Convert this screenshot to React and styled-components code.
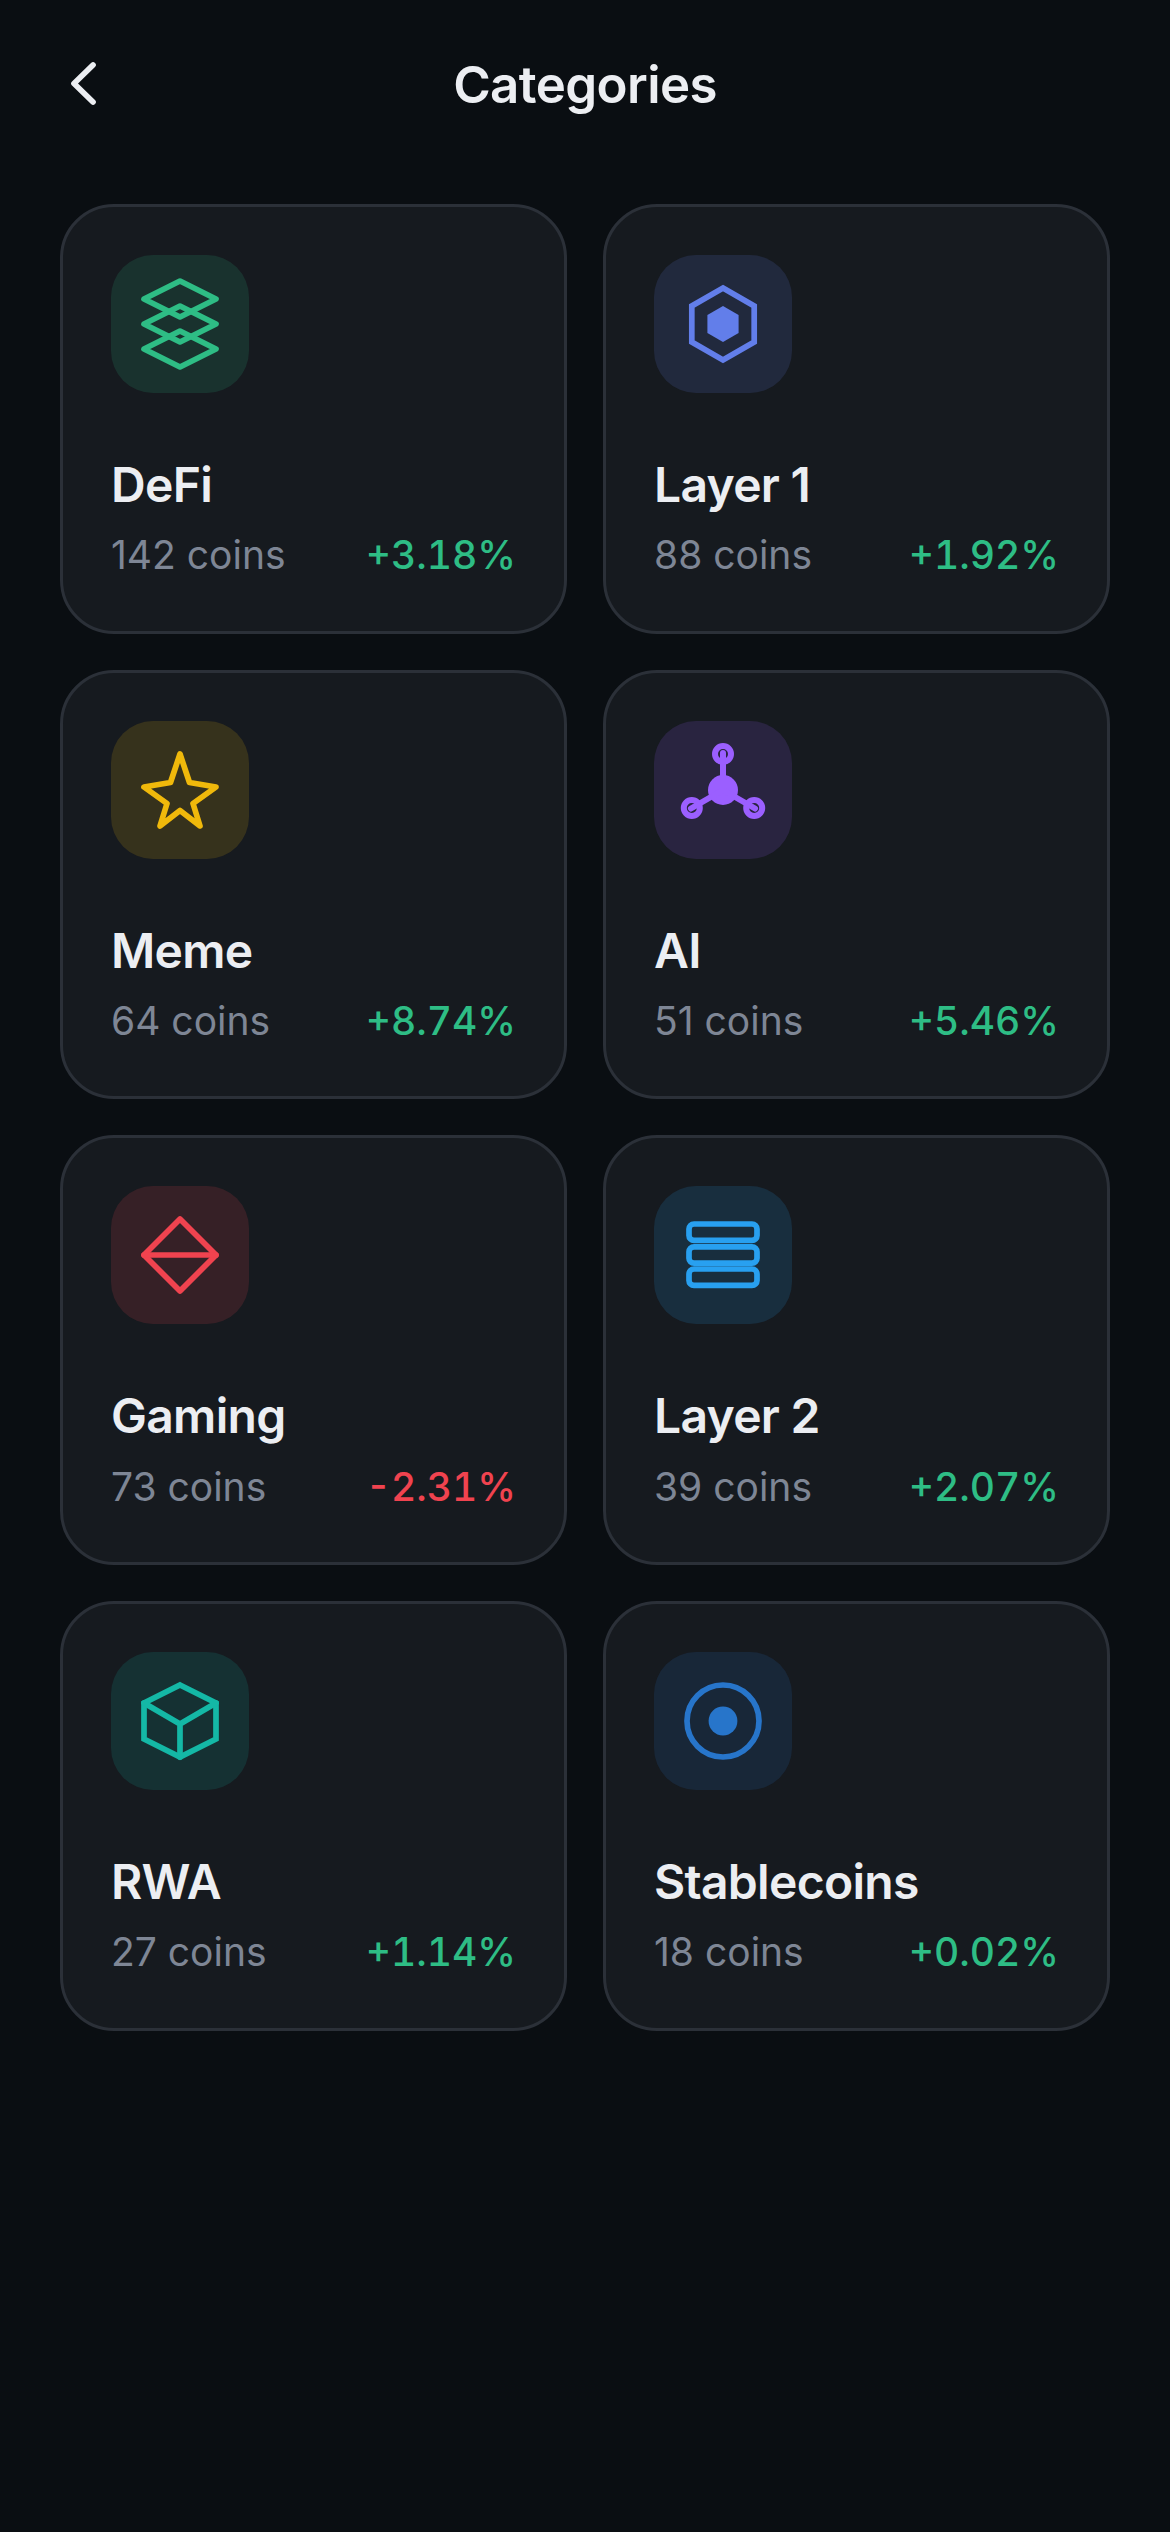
import React from 'react';
import styled, { createGlobalStyle } from 'styled-components';

const GlobalStyle = createGlobalStyle`
    html, body {
        margin: 0;
        padding: 0;
        background: #0a0e12;
    }
    body {
        font-family: Inter, "Noto Sans", sans-serif;
        -webkit-font-smoothing: antialiased;
    }
`;

// icons are drawn in real pixels around the middle of the tile
const Icon = ({ color, children }) => (
    <IconSvg
        viewBox="-45 -50 90 100"
        fill="none"
        stroke={color}
        strokeWidth="5.7"
        strokeLinecap="round"
        strokeLinejoin="round"
    >
        {children}
    </IconSvg>
);

const icons = {
    layers: (color) => (
        <Icon color={color}>
            <path d="M0 -43 L36 -25 L0 -7 L-36 -25 Z" />
            <path d="M0 -18 L36 0 L0 18 L-36 0 Z" />
            <path d="M0 7 L36 25 L0 43 L-36 25 Z" />
        </Icon>
    ),
    hexagon: (color) => (
        <Icon color={color}>
            <path strokeLinejoin="miter" d="M0 -36 L31.2 -18 V18 L0 36 L-31.2 18 V-18 Z" />
            <path fill={color} stroke="none" d="M0 -18 L15.6 -9 V9 L0 18 L-15.6 9 V-9 Z" />
        </Icon>
    ),
    star: (color) => (
        <Icon color={color}>
            <path d="M0 -36 L9.5 -7.5 L36 -3 L13 13.5 L20 36 L0 20.5 L-20 36 L-13 13.5 L-36 -3 L-9.5 -7.5 Z" />
        </Icon>
    ),
    network: (color) => (
        <Icon color={color}>
            <circle cx="0" cy="0" r="15" fill={color} stroke="none" />
            <circle cx="0" cy="-36" r="8" strokeWidth="6" />
            <circle cx="-31.2" cy="18" r="8" strokeWidth="6" />
            <circle cx="31.2" cy="18" r="8" strokeWidth="6" />
            <path strokeWidth="6" d="M0 0 L0 -37 M0 0 L-32 18.5 M0 0 L32 18.5" />
        </Icon>
    ),
    diamond: (color) => (
        <Icon color={color}>
            <path d="M0 -36 L36 0 L0 36 L-36 0 Z" />
            <path d="M-36 0 H36" />
        </Icon>
    ),
    stack: (color) => (
        <Icon color={color}>
            <rect x="-34" y="-31" width="68" height="16.4" rx="5" />
            <rect x="-34" y="-8.2" width="68" height="16.4" rx="5" />
            <rect x="-34" y="14" width="68" height="16.4" rx="5" />
        </Icon>
    ),
    box: (color) => (
        <Icon color={color}>
            <path strokeLinejoin="miter" d="M0 -36 L36 -18 V18 L0 36 L-36 18 V-18 Z" />
            <path d="M-36 -18 L0 3 L36 -18 M0 3 V36" />
        </Icon>
    ),
    target: (color) => (
        <Icon color={color}>
            <circle cx="0" cy="0" r="36" />
            <circle cx="0" cy="0" r="14.4" fill={color} stroke="none" />
        </Icon>
    ),
};

const categories = [
    { name: 'DeFi', coins: 142, change: '+3.18%', icon: 'layers', color: '#2ebd85' },
    { name: 'Layer 1', coins: 88, change: '+1.92%', icon: 'hexagon', color: '#627eea' },
    { name: 'Meme', coins: 64, change: '+8.74%', icon: 'star', color: '#f0b90b' },
    { name: 'AI', coins: 51, change: '+5.46%', icon: 'network', color: '#9b5fff' },
    { name: 'Gaming', coins: 73, change: '-2.31%', icon: 'diamond', color: '#f0434f', down: true },
    { name: 'Layer 2', coins: 39, change: '+2.07%', icon: 'stack', color: '#28a0f0' },
    { name: 'RWA', coins: 27, change: '+1.14%', icon: 'box', color: '#14b8a6' },
    { name: 'Stablecoins', coins: 18, change: '+0.02%', icon: 'target', color: '#2775ca' },
];

const App = () => {
    return (
        <Page>
            <GlobalStyle />
            <Header>
                <BackButton aria-label="Back">
                    <svg width="36" height="54" viewBox="0 0 36 54" fill="none" stroke="#eceef2" strokeWidth="5.7" strokeLinecap="round" strokeLinejoin="round">
                        <path d="M27 8 L8 26.5 L27 45" />
                    </svg>
                </BackButton>
                <Title>Categories</Title>
            </Header>

            <Grid>
                {categories.map((c) => (
                    <Card key={c.name}>
                        <IconTile $color={c.color}>{icons[c.icon](c.color)}</IconTile>
                        <Name>{c.name}</Name>
                        <Meta>
                            <Coins>{c.coins} coins</Coins>
                            <Change $down={c.down}>{c.change}</Change>
                        </Meta>
                    </Card>
                ))}
            </Grid>
        </Page>
    );
};

export default App;

const Page = styled.div`
    min-height: 2532px;
    box-sizing: border-box;
    background: #0a0e12;
    padding: 0 60px;
`;

const Header = styled.header`
    position: relative;
    height: 168px;
    display: flex;
    align-items: center;
    justify-content: center;
`;

const BackButton = styled.button`
    position: absolute;
    left: 6px;
    top: 57px;
    padding: 0;
    border: 0;
    background: none;
    display: flex;
`;

const Title = styled.h1`
    margin: 0;
    color: #eceef2;
    font-size: 51px;
    font-weight: 600;
    letter-spacing: -0.6px;
`;

const Grid = styled.div`
    margin-top: 36px;
    display: grid;
    grid-template-columns: 1fr 1fr;
    gap: 36px;
`;

const Card = styled.div`
    box-sizing: border-box;
    height: 429.67px;
    padding: 48px;
    background: #161a1f;
    border: 3px solid #2b3038;
    border-radius: 54px;
`;

const IconTile = styled.div`
    width: 138px;
    height: 138px;
    border-radius: 42px;
    background: ${(p) => p.$color}26;
    display: flex;
    align-items: center;
    justify-content: center;
`;

const IconSvg = styled.svg`
    width: 90px;
    height: 100px;
    flex: none;
`;

const Name = styled.div`
    margin-top: 61px;
    color: #eceef2;
    font-size: 48px;
    line-height: 62.4px;
    font-weight: 600;
    letter-spacing: -0.7px;
`;

const Meta = styled.div`
    margin-top: 11px;
    display: flex;
    justify-content: space-between;
    align-items: center;
    font-size: 39px;
    line-height: 55.3px;
`;

const Coins = styled.span`
    color: #7e8695;
`;

const Change = styled.span`
    color: ${(p) => (p.$down ? '#f0434f' : '#2ebd85')};
    font-weight: 500;
    font-variant-numeric: tabular-nums;
`;
